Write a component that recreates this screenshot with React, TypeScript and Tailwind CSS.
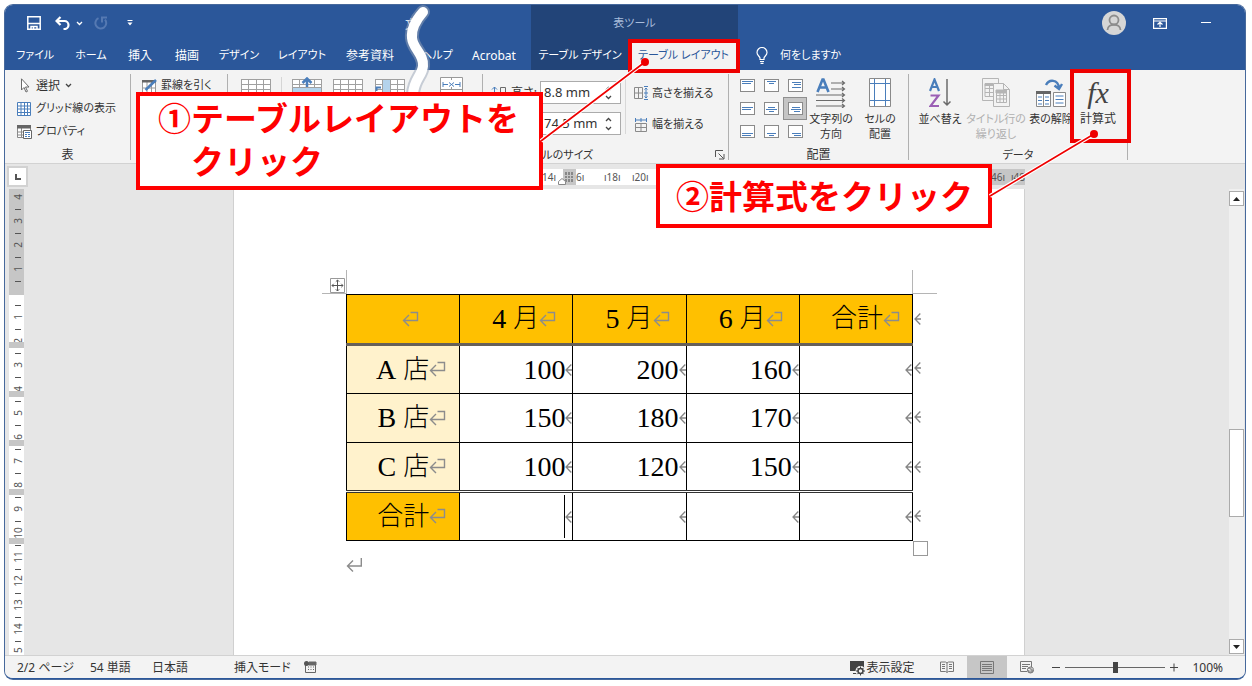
import type { ReactNode } from "react";

const BLUE = "#4a7ebb";
const GRAY = "#6b6b6b";

function ReturnMark({ plain = false }: { plain?: boolean }) {
  return (
    <svg width="17" height="17" viewBox="0 0 17 17" fill="none" stroke="#8c8c8c" strokeWidth="1.4" aria-hidden="true">
      <path d={plain ? "M15.300 1v8H1.500M7 3.500 1.500 9 7 14.500" : "M8.500 1.500h7V9.500H1.500M7 4 1.500 9.500 7 15"} />
    </svg>
  );
}

function CellMark() {
  return (
    <svg width="7" height="12" viewBox="0 0 7 12" fill="none" stroke="#858585" strokeWidth="1.3" className="shrink-0" aria-hidden="true">
      <path d="M6.300 0.500 1 6l5.300 5.500M1 6h6" />
    </svg>
  );
}

function Tab({ children, className }: { children: ReactNode; className: string }) {
  return (
    <button className={`flex h-full shrink-0 items-center justify-center whitespace-nowrap ${className}`}>
      {children}
    </button>
  );
}

function Group({ label, className, labelClass = "", children, launcher = false }: { label?: string; className: string; labelClass?: string; children: ReactNode; launcher?: boolean }) {
  return (
    <section className={`mt-1 flex h-[86px] shrink-0 flex-col border-r border-[#b0b0b0] ${className}`}>
      <div className="flex h-[72px] shrink-0 items-start">{children}</div>
      <div className={`relative flex h-[18px] shrink-0 items-center justify-center leading-4 ${labelClass}`}>
        {label}
        {launcher && (
          <button aria-label="セルのサイズの詳細" className="absolute right-[3px] top-1">
            <svg width="10" height="10" viewBox="0 0 10 10" fill="none" stroke="#555">
              <path d="M0.500 7V0.500H8M3.500 3.500l5 5M9 4v5H4" />
            </svg>
          </button>
        )}
      </div>
    </section>
  );
}

function Grid({ kind }: { kind: "plain" | "up" | "left" }) {
  return (
    <svg width="30" height="28" viewBox="0 0 30 28" fill="none" stroke="#a0a0a0" aria-hidden="true">
      <rect x="0.500" y="2.500" width="29" height="24" fill="#fff" />
      <path d="M0 7.500h30M0 12.500h30M0 19.500h30M7.500 2v24M15.500 2v24M22.500 2v24" />
      {kind === "up" && <path d="M0.500 10.500h29v7H.500z" fill="#b4d3ec" />}
      {kind === "up" && <path d="M15 10V2M10.500 6 15 1.500 19.500 6" stroke={BLUE} strokeWidth="2.500" />}
      {kind === "left" && <path d="M8 3h7v23H8z" fill="#b4d3ec" stroke="none" />}
      {kind === "left" && <path d="M6 10.500H1.500V14" stroke={BLUE} strokeWidth="2" />}
    </svg>
  );
}

const ALIGN_LINES = [
  ["M2 2.500h11M2 4.500h9", "M3 2.500h9M5 4.500h5", "M4 3.500h9M6 5.500h7M4 8.500h9"],
  ["M2 5.500h11M2 7.500h9", "M4 5.500h7M2 7.500h11M5 9.500h5", "M4 5.500h8M3 7.500h10M6 9.500h6"],
  ["M2 8.500h11M2 10.500h9", "M3 8.500h9M5 10.500h5", "M4 8.500h9M6 10.500h7"],
];

function AlignIcon({ v, h }: { v: number; h: number }) {
  return (
    <svg width="15" height="13" viewBox="0 0 15 13" className="shrink-0" aria-hidden="true">
      <rect x="0.500" y="0.500" width="14" height="12" fill="#fff" stroke="#8a8a8a" />
      <path d={ALIGN_LINES[v][h]} stroke={BLUE} strokeWidth="1.200" />
    </svg>
  );
}

function Spin({ name, label, value }: { name: string; label?: string; value: string }) {
  return (
    <div className="flex h-[23px] items-center">
      <span className="w-[57px] whitespace-nowrap pl-2">
        {label && (
          <label htmlFor={name} className="flex items-center gap-1">
            <svg width="16" height="14" viewBox="0 0 16 14" fill="none" stroke={GRAY} aria-hidden="true">
              <path d="M3.500 1v12M1 3.500l2.500-2.500L6 3.500M1 10.500l2.500 2.500 2.500-2.500" stroke={BLUE} />
              <path d="M9.500 13V1.500h5V13M9.500 7h5" />
            </svg>
            {label}
          </label>
        )}
      </span>
      <span className="flex h-[23px] w-[81px] items-center border border-[#ababab] bg-white">
        <input id={name} aria-label={name} defaultValue={value} className="w-[64px] bg-transparent pl-[3px] text-[13px] outline-none" />
        <span className="flex flex-col gap-1">
          <button aria-label={`${name}を増やす`}>
            <Chevron up />
          </button>
          <button aria-label={`${name}を減らす`}>
            <Chevron />
          </button>
        </span>
      </span>
    </div>
  );
}

function Chevron({ up = false, light = false }: { up?: boolean; light?: boolean }) {
  return (
    <svg width="7" height="5" viewBox="0 0 7 5" fill="none" stroke={light ? "#fff" : "#444"} strokeWidth="1.3" className="block" aria-hidden="true">
      <path d={up ? "M1 4l2.500-2.500L6 4" : "M1 1l2.500 2.500L6 1"} />
    </svg>
  );
}

function BigButton({ icon, lines, className }: { icon: ReactNode; lines: string[]; className: string }) {
  return (
    <button className={`flex shrink-0 flex-col items-center whitespace-nowrap leading-[15px] ${className}`}>
      <span className="flex h-[37px] items-center justify-center">{icon}</span>
      {lines.map((l) => (
        <span key={l}>{l}</span>
      ))}
    </button>
  );
}

function Header() {
  return (
    <header className="flex h-[65px] shrink-0 bg-[#2b579a] text-white">
      <div className="flex w-[526px] shrink-0 flex-col">
        <div className="flex h-9 items-center pl-[22px]">
          <button aria-label="上書き保存" className="mr-[14px]">
            <svg width="14" height="14" viewBox="0 0 14 14" fill="none" stroke="#fff" strokeWidth="1.500">
              <path d="M.800.800h12.400v12.400H.800zM1 7.500h12" />
              <path d="M4 13V10.500h6V13M6.500 11v2" />
            </svg>
          </button>
          <button aria-label="元に戻す" className="mr-[6px]">
            <svg width="15" height="14" viewBox="0 0 15 14" fill="none" stroke="#fff" strokeWidth="2.200">
              <path d="M5.500 1 1.500 5l4 4M2 5h7.500a4 4 0 0 1 0 8H8.500" />
            </svg>
          </button>
          <button aria-label="元に戻す一覧" className="mr-[11px]">
            <Chevron light />
          </button>
          <button aria-label="やり直し" className="mr-[19px]">
            <svg width="14" height="14" viewBox="0 0 14 14" fill="none" stroke="#5579b2" strokeWidth="2">
              <path d="M4.500 2.200a5.400 5.400 0 1 0 6.500 1.500M8 6.500V1.500h5" />
            </svg>
          </button>
          <button aria-label="クイック アクセスのカスタマイズ">
            <svg width="6" height="6" viewBox="0 0 6 6">
              <path d="M0.500 0h5v1h-5zM.500 2.500h5L3 5.500z" fill="#fff" />
            </svg>
          </button>
          <span className="ml-[272px] pt-1 leading-4">文</span>
        </div>
        <nav className="flex h-[29px]">
          <Tab className="w-[60px] text-[11px]">ファイル</Tab>
          <Tab className="w-[52px] text-[11px]">ホーム</Tab>
          <Tab className="w-[46px]">挿入</Tab>
          <Tab className="w-12">描画</Tab>
          <Tab className="w-14 text-[11px]">デザイン</Tab>
          <Tab className="w-[70px] text-[11px]">レイアウト</Tab>
          <Tab className="w-[66px]">参考資料</Tab>
          <Tab className="ml-[14px] w-10 text-[11px]">ヘルプ</Tab>
          <Tab className="w-[74px]">Acrobat</Tab>
        </nav>
      </div>
      <div className="flex w-[207px] shrink-0 flex-col bg-[#224478]">
        <div className="flex h-9 items-center justify-center text-[11px] text-[#a9bddb]">表ツール</div>
        <nav className="flex h-[29px] text-[11px]">
          <Tab className="w-[98px]">テーブル デザイン</Tab>
          <Tab className="w-[109px] bg-[#f3f3f3] text-[#2b579a]">テーブル レイアウト</Tab>
        </nav>
      </div>
      <div className="flex min-w-0 flex-1 flex-col">
        <div className="flex h-9 items-center justify-end pr-[34px]">
          <button aria-label="アカウント" className="mr-[27px]">
            <svg width="24" height="24" viewBox="0 0 24 24" fill="none" stroke="#8c8c8c" strokeWidth="1.800">
              <circle cx="12" cy="12" r="12" fill="#d6d6d6" stroke="none" />
              <circle cx="12" cy="9" r="4.500" />
              <path d="M5.500 19c0-7 13-7 13 0" />
            </svg>
          </button>
          <button aria-label="リボンの表示オプション" className="mr-[34px]">
            <svg width="14" height="11" viewBox="0 0 14 11" fill="none" stroke="#fff" strokeWidth="1.200">
              <path d="M.600.600h12.800v9.800H.600zM.600 3h12.800M7 9V4.500M4.500 6.500 7 4.200l2.500 2.300" />
            </svg>
          </button>
          <button aria-label="最小化" className="flex h-4 items-center">
            <svg width="10" height="2" viewBox="0 0 10 2">
              <path d="M0 .500h10" stroke="#fff" />
            </svg>
          </button>
        </div>
        <button className="flex h-[29px] items-center gap-3 pl-[18px] text-[11px]">
          <svg width="12" height="17" viewBox="0 0 12 17" fill="none" stroke="#fff" strokeWidth="1.200">
            <path d="M4 12.500V11C3.500 9 1 8.500 1 5.500a5 5 0 0 1 10 0C11 8.500 8.500 9 8 11v1.500zM4 14.500h4M4.500 16.300h3" />
          </svg>
          何をしますか
        </button>
      </div>
    </header>
  );
}

function Ribbon() {
  return (
    <div className="flex h-[94px] shrink-0 overflow-hidden border-b border-[#d2d2d2] bg-[#f3f3f3]">
      <Group label="表" className="w-[126px]">
        <div className="flex flex-col pl-3">
          <button className="flex h-[23px] items-center gap-[5px]">
            <svg width="12" height="15" viewBox="0 0 12 15" className="mx-[1px]" fill="#fff" stroke={GRAY}>
              <path d="M3.500.800v11.200l2.500-2.500 2 4.500 1.500-.700-2-4.300H11z" />
            </svg>
            選択 <Chevron />
          </button>
          <button className="flex h-[23px] items-center gap-[5px] whitespace-nowrap text-[11px]">
            <svg width="14" height="14" viewBox="0 0 14 14" fill="#fff" stroke={BLUE}>
              <path d="M.500.500h13v13H.500zM0 4h14M0 7h14M0 10.500h14M4 0v14M7.500 0v14M10.500 0v14" />
            </svg>
            グリッド線の表示
          </button>
          <button className="flex h-[23px] items-center gap-1 text-[11px]">
            <svg width="15" height="14" viewBox="0 0 15 14" fill="#fff" stroke="#8a8a8a">
              <path d="M.500.500h13v12H.500zM0 7h9M0 10h9M4.500 3v9" />
              <path d="M0 0h14v3.500H0z" fill="#666" stroke="none" />
              <path d="M6.500 5.500h8v8h-8z" stroke="#666" />
              <path d="M8 7.500h5M8 9.500h2M11 9.500h2M8 11.500h2M11 11.500h2" stroke={BLUE} />
            </svg>
            プロパティ
          </button>
        </div>
      </Group>
      <Group className="w-[97px]">
        <button className="ml-[11px] flex h-[23px] items-center gap-1 whitespace-nowrap text-[11px]">
          <svg width="15" height="14" viewBox="0 0 15 14" fill="#fff" stroke="#999">
            <path d="M.500 1.500h13v12H.500zM0 9h14M5 3v10M9.500 3v10" />
            <path d="M0 1h14v2.500H0z" fill="#666" stroke="none" />
            <path d="M3.500 11 14 1" stroke={BLUE} strokeWidth="2.500" />
          </svg>
          罫線を引く
        </button>
      </Group>
      <Group className="w-[255px]">
        <div className="flex items-start pl-[13px] pt-[3px]">
          <Grid kind="plain" />
          <span className="mx-[10px] h-14 w-px bg-[#d5d5d5]" />
          <Grid kind="up" />
          <span className="w-[11px]" />
          <Grid kind="plain" />
          <span className="w-3" />
          <Grid kind="left" />
          <svg width="23" height="24" viewBox="0 0 23 24" fill="#fff" stroke="#999" className="ml-[35px]">
            <path d="M.500.500h22v22H.500zM0 12.500h23M11.500 0v3M11.500 10v3" />
            <path d="M3 7.500h5M15 7.500h5M3 5v5M20 5v5M9 5.500l5 4M14 5.500l-5 4" stroke={BLUE} />
          </svg>
        </div>
      </Group>
      <Group label="セルのサイズ" labelClass="pr-[86px] text-[11px]" className="w-[246px]" launcher>
        <div className="flex flex-col gap-2 pt-[7px]">
          <Spin name="高さ" label="高さ:" value="8.8 mm" />
          <Spin name="幅" value="74.5 mm" />
        </div>
        <div className="ml-1 mt-1 h-14 w-px shrink-0 bg-[#d8d8d8]" />
        <div className="ml-2 flex flex-col gap-2 whitespace-nowrap pt-[7px] text-[11px]">
          <button className="flex h-6 items-center gap-1">
            <svg width="14" height="14" viewBox="0 0 14 14" fill="none" stroke="#8a8a8a">
              <path d="M.500 1.500h8v11h-8zM0 7h9M4.500 1v11" />
              <path d="M10 .500h4M10 13.500h4M12 2v10M10.500 3.500 12 2l1.500 1.500M10.500 10.500 12 12l1.500-1.500M10 7h4" stroke={BLUE} />
            </svg>
            高さを揃える
          </button>
          <button className="flex h-[23px] items-center gap-1">
            <svg width="14" height="14" viewBox="0 0 14 14" fill="none" stroke="#8a8a8a">
              <path d="M1.500 5.500h11v8h-11zM7 5v9M1 9.500h12" />
              <path d="M1.500 0v4M7 0v4M12.500 0v4M1.500 2h11" stroke={BLUE} />
            </svg>
            幅を揃える
          </button>
        </div>
      </Group>
      <Group label="配置" className="w-[180px]">
        <div className="ml-[6px] grid shrink-0 grid-cols-[24px_24px_24px] grid-rows-[23px_23px_23px]">
          {[0, 1, 2].map((v) =>
            [0, 1, 2].map((h) => (
              <button
                key={`${v}${h}`}
                aria-label={`配置 ${v + 1}-${h + 1}`}
                className={`flex items-center justify-center ${v === 1 && h === 2 ? "border border-[#8f8f8f] bg-[#c5c5c5]" : ""}`}
              >
                <AlignIcon v={v} h={h} />
              </button>
            )),
          )}
        </div>
        <BigButton
          className="w-12 text-[11px]"
          lines={["文字列の", "方向"]}
          icon={
            <svg width="30" height="30" viewBox="0 0 30 30" fill="none" stroke={GRAY} strokeWidth="1.200">
              <path d="M1.500 14 6.500 1.500h1L12.500 14M3.500 9.500h7" stroke={BLUE} strokeWidth="2.600" />
              <path d="M15 5h13M15 11h13M0 17h28M0 22.500h28M0 28h28M26 3l2.500 2L26 7M26 9l2.500 2-2.500 2M26 15l2.500 2-2.500 2M26 20.500l2.500 2-2.500 2M26 26l2.500 2-2.500 2" />
            </svg>
          }
        />
        <BigButton
          className="w-[50px] text-[11px]"
          lines={["セルの", "配置"]}
          icon={
            <svg width="22" height="29" viewBox="0 0 22 29" fill="#fff" stroke="#8a8a8a">
              <path d="M.500.500h21v28H.500z" />
              <path d="M5.500 1v27M16.500 1v27M1 5.500h20M1 22.500h20" stroke={BLUE} />
            </svg>
          }
        />
      </Group>
      <Group label="データ" labelClass="text-[11px]" className="w-[219px]">
        <BigButton
          className="ml-[6px] w-[50px] text-[11px]"
          lines={["並べ替え"]}
          icon={
            <svg width="22" height="30" viewBox="0 0 22 30" fill="none" strokeWidth="2.200">
              <path d="M1 13 5.500 1.500 10 13M2.500 9h6" stroke={BLUE} />
              <path d="M1.500 17.500h8L1.500 28H10" stroke="#9b5fb5" />
              <path d="M18 1v26M14.500 23.500 18 27l3.500-3.500" stroke={GRAY} strokeWidth="1.500" />
            </svg>
          }
        />
        <BigButton
          className="w-[62px] text-[11px] text-[#b0b0b0]"
          lines={["タイトル行の", "繰り返し"]}
          icon={
            <svg width="28" height="29" viewBox="0 0 28 29" fill="#f3f3f3" stroke="#b5b5b5">
              <path d="M.500.500h16v22H.500zM3 6.500h11v12H3zM3 10.500h11M3 14.500h11M7.500 6v12" />
              <path d="M11.500 5.500h10l6 6v17h-16zM21.500 5.500v6h6M14.500 13.500h10v11h-10zM14.500 17.500h10M14.500 21h10M18 13v11M21.500 13v11" />
              <path d="M3 5.500h8v2H3zM14 12h10.500v3H14z" fill="#b5b5b5" />
            </svg>
          }
        />
        <BigButton
          className="w-12 text-[11px]"
          lines={["表の解除"]}
          icon={
            <svg width="30" height="28" viewBox="0 0 30 28" fill="#fff" stroke="#8a8a8a">
              <path d="M.500 12.500h14v15H.500zM7.500 13v14M17.500 13.500h12v14h-12z" />
              <path d="M0 12h15v3H0z" fill="#666" stroke="none" />
              <path d="M2 18h4M2 21.500h4M2 25h4M9 18h4M9 21.500h4M9 25h4M19.500 17h8M19.500 20.500h8M19.500 24h8" stroke={BLUE} />
              <path d="M10 6c3-6 12-6 13 3M18.500 6.500 23 10l3-5" fill="none" stroke={BLUE} strokeWidth="2.400" />
            </svg>
          }
        />
        <BigButton
          className="w-[46px]"
          lines={["計算式"]}
          icon={<span className="font-['Liberation_Serif',serif] text-[30px] italic leading-[34px] text-[#444]">fx</span>}
        />
      </Group>
    </div>
  );
}

function TopRuler() {
  return (
    <div className="flex h-[25px] shrink-0 items-center">
      <button aria-label="タブの種類" className="ml-[2px] flex size-[21px] items-center justify-center border-2 border-[#d2d2d2] bg-white">
        <svg width="6" height="6" viewBox="0 0 6 6">
          <path d="M1 0v5h5" fill="none" stroke="#555" strokeWidth="2" />
        </svg>
      </button>
      <div className="ml-[206px] flex h-4 w-[791px] shrink-0 items-center bg-white pl-[302px] text-[10px] leading-4 text-[#555]">
        <span className="w-5 text-right">14ı</span>
        <span className="flex h-4 w-5 items-center justify-end bg-[linear-gradient(90deg,#ffffff_7px,#c6c6c6_7px)]">
          <svg width="19" height="16" viewBox="0 0 19 16">
            <path d="M8 3h8v10H8z" fill="#888" />
            <path d="M8 6.500h8M8 9.500h8M10.500 3v10M13.500 3v10" stroke="#c6c6c6" />
            <path d="M1.500 15.500v-3L5 9.500l3.500 3v3z" fill="#fff" stroke="#888" />
          </svg>
        </span>
        <span className="w-7">6ı</span>
        <span className="w-7">ı18ı</span>
        <span className="w-7">ı20ı</span>
        <span className="flex-1">ı</span>
        <span className="flex h-4 w-[34px] items-center justify-between bg-[#c6c6c6]">
          <span>46ı</span>
          <span>ı48</span>
        </span>
      </div>
    </div>
  );
}

const RULER = ["4", "", "3", "", "2", "", "1", "", " ", "", "1", "", "2", "", "3", "", "4", "", "5", "", "6", "", "7", "", "8", "", "9", "", "10", "", "11", "", "12", "", "13", "", "14", "", "15"];

function SideRuler() {
  return (
    <div className="relative ml-1 w-[15px] shrink-0 overflow-hidden bg-white text-[10px] text-[#555]">
      <div className="flex flex-col bg-[linear-gradient(#c6c6c6_106px,#ffffff_106px)] pt-[2px]">
        {RULER.map((n, i) => (
          <span key={i} className="flex h-3 items-center justify-center pl-[3px]">
            {n === "" ? <i className="block h-px w-[6px] bg-[#555]" /> : <span className="-rotate-90 leading-3">{n}</span>}
          </span>
        ))}
      </div>
      <div className="absolute inset-x-0 top-[153px] flex flex-col gap-[43px]">
        {[0, 1, 2, 3, 4].map((i) => (
          <i key={i} className="h-[6px] bg-[#c6c6c6]" />
        ))}
      </div>
    </div>
  );
}

const K = "text-[26px]";

function HeadCell({ num, kanji }: { num?: string; kanji?: string }) {
  return (
    <th scope="col" className="border border-black p-0 font-light">
      <div className={`flex items-center justify-end ${kanji ? (num ? "pr-4" : "pr-3") : "pr-10"}`}>
        {num && <span className="mr-[7px] text-[28px]">{num}</span>}
        {kanji && <span className={K}>{kanji}</span>}
        <ReturnMark />
      </div>
    </th>
  );
}

function SalesTable() {
  const rows = [
    { shop: "A", v: ["100", "200", "160", ""] },
    { shop: "B", v: ["150", "180", "170", ""] },
    { shop: "C", v: ["100", "120", "150", ""] },
    { shop: "", v: ["", "", "", ""] },
  ];
  return (
    <div className="relative w-[567px]">
      <table className="w-full table-fixed border-collapse font-['Liberation_Serif','Noto_Sans_CJK_JP',serif] text-[28px] font-light leading-[34px] text-black">
        <thead>
          <tr className="h-[50px] border-b-[3px] border-[#66605a] bg-[#ffc000]">
            <HeadCell />
            <HeadCell num="4" kanji="月" />
            <HeadCell num="5" kanji="月" />
            <HeadCell num="6" kanji="月" />
            <HeadCell kanji="合計" />
          </tr>
        </thead>
        <tbody>
          {rows.map((r, i) => (
            <tr key={i} className={i === 2 ? "h-[49px]" : "h-[49px]"}>
              <th
                scope="row"
                className={`border border-black p-0 font-light ${i === 3 ? "border-t-[3px] border-t-[#333] [border-top-style:double] bg-[#ffc000]" : "bg-[#fff2cc]"} ${i === 0 ? "border-t-[3px] border-t-[#66605a]" : ""}`}
              >
                <div className="flex items-center justify-end pr-[13px]">
                  {r.shop && <span className="mr-[7px]">{r.shop}</span>}
                  <span className={K}>{r.shop ? "店" : "合計"}</span>
                  <ReturnMark />
                </div>
              </th>
              {r.v.map((v, j) => (
                <td
                  key={j}
                  className={`border border-black p-0 ${i === 3 ? "border-t-[3px] border-t-[#333] [border-top-style:double]" : ""} ${i === 0 ? "border-t-[3px] border-t-[#66605a]" : ""}`}
                >
                  <div className="flex h-[44px] items-center justify-end">
                    {v}
                    {i === 3 && j === 0 && <i className="h-[43px] w-px bg-black" />}
                    <CellMark />
                  </div>
                </td>
              ))}
            </tr>
          ))}
        </tbody>
      </table>
      <div className="absolute left-full top-0 flex h-full flex-col justify-around pl-px">
        {[0, 1, 2, 3, 4].map((i) => (
          <CellMark key={i} />
        ))}
      </div>
      <button aria-label="表の移動" className="absolute -left-4 -top-4">
        <svg width="15" height="15" viewBox="0 0 15 15" fill="#fff" stroke="#555">
          <path d="M.500.500h14v14H.500z" stroke="#999" />
          <path d="M7.500 2v11M2 7.500h11M5.800 3.700 7.500 2l1.700 1.700M5.800 11.300 7.500 13l1.700-1.700M3.700 5.800 2 7.500l1.700 1.700M11.300 5.800 13 7.500l-1.700 1.700" />
        </svg>
      </button>
      <i className="absolute -left-6 -top-px h-px w-6 bg-[#b5b5b5]" />
      <i className="absolute -top-6 left-0 h-6 w-px bg-[#b5b5b5]" />
      <i className="absolute -right-6 -top-px h-px w-6 bg-[#b5b5b5]" />
      <i className="absolute -top-6 right-0 h-6 w-px bg-[#b5b5b5]" />
      <i className="absolute left-full top-full size-[15px] border border-[#999] bg-white" />
    </div>
  );
}

function ScrollBar() {
  return (
    <div className="mr-px flex w-[15px] shrink-0 flex-col bg-[#f0f0f0] pb-px pt-[2px]">
      <button aria-label="上へ" className="flex h-[15px] items-center justify-center border border-[#ababab] bg-white">
        <svg width="7" height="4" viewBox="0 0 7 4">
          <path d="M0 4h7L3.500 0z" fill="#222" />
        </svg>
      </button>
      <div className="flex flex-1 flex-col">
        <span className="grow-[223]" />
        <span className="h-[88px] border border-[#ababab] bg-white" />
        <span className="grow-[122]" />
      </div>
      <button aria-label="下へ" className="flex h-[15px] items-center justify-center border border-[#ababab] bg-white">
        <svg width="7" height="4" viewBox="0 0 7 4">
          <path d="M0 0h7L3.500 4z" fill="#222" />
        </svg>
      </button>
    </div>
  );
}

function StatusBar() {
  return (
    <footer className="flex h-[23px] shrink-0 items-center whitespace-nowrap border-t border-[#d2d2d2] bg-[#f3f3f3] pl-3 pr-[22px] leading-5">
      <span className="w-[73px] pt-[2px]">2/2 ページ</span>
      <span className="w-[62px] pt-[2px]">54 単語</span>
      <span className="w-[82px] pt-[2px]">日本語</span>
      <span className="w-[70px] pt-[2px]">挿入モード</span>
      <svg width="13" height="12" viewBox="0 0 13 12" fill="none" stroke="#666">
        <path d="M1.500 3.500h10v8h-10zM4 6h1M6.500 6h1M9 6h1M4 8.500h1M6.500 8.500h1M9 8.500h1" />
        <path d="M5 1h7v3H5z" fill="#666" />
        <circle cx="2.500" cy="2.500" r="2.500" fill="#555" stroke="none" />
      </svg>
      <div className="ml-auto flex h-full items-center">
        <button className="flex items-center pt-[2px]">
          <svg width="17" height="15" viewBox="0 0 17 15">
            <path d="M1 0h14v10H1zM4 12h5v1H4z" fill="#444" />
            <circle cx="11.500" cy="10" r="5" fill="#f3f3f3" />
            <circle cx="11.500" cy="10" r="2.500" fill="none" stroke="#444" strokeWidth="1.500" />
            <path d="M11.500 5.500v2M11.500 12.500v2M7 10h2M14 10h2M8.300 6.800l1.400 1.400M13.300 11.800l1.400 1.400M8.300 13.200l1.400-1.400M13.300 8.200l1.400-1.400" stroke="#444" />
          </svg>
          表示設定
        </button>
        <button aria-label="閲覧モード" className="ml-[26px]">
          <svg width="14" height="12" viewBox="0 0 14 12" fill="none" stroke="#777">
            <path d="M.500 1h5L7 2l1.500-1h5v9.500h-5L7 11.500l-1.500-1h-5zM7 2v9M2 3.500h3M2 5.500h3M2 7.500h3M9 3.500h3M9 5.500h3M9 7.500h3" />
          </svg>
        </button>
        <button aria-label="印刷レイアウト" className="ml-[13px] flex h-full w-10 items-center justify-center bg-[#c6c6c6]">
          <svg width="14" height="13" viewBox="0 0 14 13" fill="none" stroke="#777">
            <path d="M.500.500h13v12H.500zM2 3.500h10M2 5.500h10M2 7.500h10M2 9.500h10" />
          </svg>
        </button>
        <button aria-label="Web レイアウト" className="ml-[13px]">
          <svg width="14" height="13" viewBox="0 0 14 13" fill="none" stroke="#777">
            <path d="M7 10.500H.500V.500h11V6M2 3.500h8M2 5.500h6M2 7.500h4" />
            <circle cx="10.500" cy="9" r="3" fill="#999" />
            <path d="M8 8.500h2v2M11 6.500l2 2" stroke="#eee" />
          </svg>
        </button>
        <button aria-label="縮小" className="ml-[18px] flex h-full items-center">
          <svg width="8" height="9" viewBox="0 0 8 9" stroke="#444">
            <path d="M0 4.500h8" />
          </svg>
        </button>
        <input
          type="range"
          aria-label="ズーム"
          min="0"
          max="100"
          defaultValue="50"
          className="mx-[5px] h-px w-[100px] appearance-none bg-[#666] [&::-webkit-slider-thumb]:h-[11px] [&::-webkit-slider-thumb]:w-[5px] [&::-webkit-slider-thumb]:appearance-none [&::-webkit-slider-thumb]:bg-[#444]"
        />
        <button aria-label="拡大" className="flex h-full items-center">
          <svg width="8" height="9" viewBox="0 0 8 9" stroke="#444">
            <path d="M0 4.500h8M4 .500v8" />
          </svg>
        </button>
        <span className="ml-[14px] pt-[2px]">100%</span>
      </div>
    </footer>
  );
}

function Annotations() {
  return (
    <div className="pointer-events-none absolute inset-0 overflow-hidden font-['Noto_Sans_CJK_JP',sans-serif] text-[33px] font-bold text-[#ff0000] [font-feature-settings:normal]">
      <svg width="50" height="100" viewBox="0 0 50 100" fill="none" className="absolute left-[394px] top-0" strokeLinecap="round">
        <path d="M29 12C22 20 17 29 18 38c1 11 12 16 11 28-1 10-9 13-10 28" stroke="#9aa5b8" strokeWidth="14" opacity="0.5" />
        <path d="M29 12C22 20 17 29 18 38c1 11 12 16 11 28-1 10-9 13-10 28" stroke="#fff" strokeWidth="10" />
      </svg>
      <div className="absolute left-[628px] top-[39px] h-[34px] w-[112px] border-4 border-[#ee0000]" />
      <div className="absolute left-[1070px] top-[69px] h-[74px] w-[61px] border-4 border-[#ee0000]" />
      <p className="absolute left-[136px] top-[92px] h-[98px] w-[407px] whitespace-nowrap border-4 border-[#ff0000] bg-white pl-[18px] leading-[43px]">
        ①テーブルレイアウトを
        <span className="block pl-[33px]">クリック</span>
      </p>
      <p className="absolute left-[656px] top-[164px] h-16 w-[336px] whitespace-nowrap border-4 border-[#ff0000] bg-white pl-4 leading-[54px]">
        ②計算式をクリック
      </p>
      <svg width="600" height="200" viewBox="0 0 600 200" className="absolute left-[540px] top-[20px]">
        <path d="M1 121 105 42M450 176 554 114" stroke="#fff" strokeWidth="4" />
        <path d="M1 121 105 42M450 176 554 114" stroke="#ee0000" strokeWidth="1.600" />
        <circle cx="105" cy="42" r="4" fill="#ee0000" />
        <circle cx="554" cy="114" r="4" fill="#ee0000" />
      </svg>
    </div>
  );
}

export default function App() {
  return (
    <div className="relative h-screen bg-white pb-[7px] pl-[5px] pr-[7px] pt-[5px] font-['Noto_Sans','Noto_Sans_CJK_JP',sans-serif] text-[12px] text-[#333] [font-feature-settings:'palt']">
      <div className="flex h-full flex-col overflow-hidden rounded-lg border-x-0 border-b border-[#2b579a] bg-[#e6e6e6] shadow-[0_0_0_1px_#47699c]">
        <Header />
        <Ribbon />
        <TopRuler />
        <main className="flex min-h-0 flex-1 overflow-hidden">
          <SideRuler />
          <div className="flex min-w-0 flex-1 justify-center overflow-hidden pl-[5px]">
            <article className="w-[792px] shrink-0 border-x border-[#d0d0d0] bg-white pl-[112px] pt-[105px]">
              <SalesTable />
              <div className="pt-4">
                <ReturnMark plain />
              </div>
            </article>
          </div>
          <ScrollBar />
        </main>
        <StatusBar />
      </div>
      <Annotations />
    </div>
  );
}
